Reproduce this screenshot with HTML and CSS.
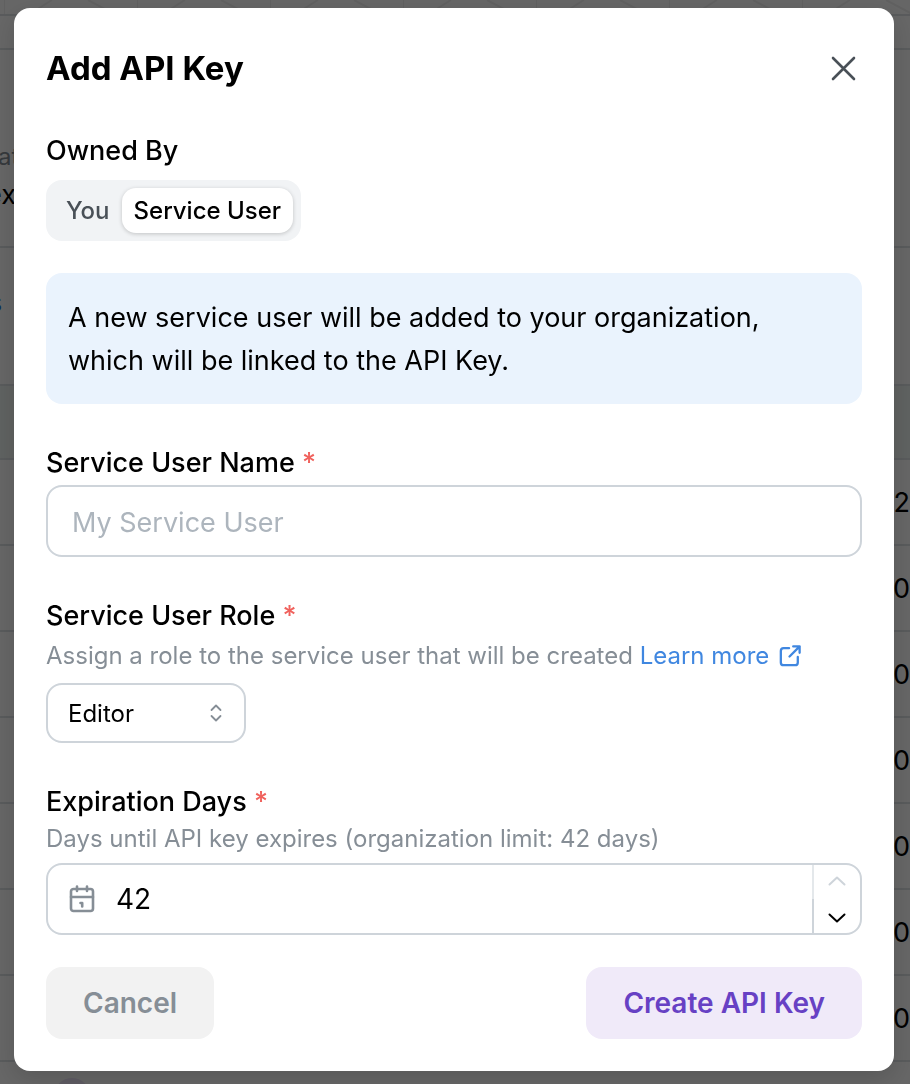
FILE: index.html
```html
<!DOCTYPE html>
<html lang="en">
<head>
<meta charset="utf-8">
<meta name="viewport" content="width=device-width, initial-scale=1">
<title>Add API Key</title>
<link rel="stylesheet" href="styles.css">
</head>
<body>
<div class="page" aria-hidden="true">
  <div class="band band-top">
    <svg class="pattern" width="100%" height="15">
      <defs>
        <pattern id="peaks" x="4" width="133" height="15" patternUnits="userSpaceOnUse">
          <path d="M0 0V15M24 15L48 0M84 0L112 15" fill="none" stroke="#f0f0f0" stroke-width="2"/>
        </pattern>
      </defs>
      <rect width="100%" height="15" fill="url(#peaks)"/>
    </svg>
  </div>
  <div class="band band-nav"></div>
  <div class="band band-intro"><p class="muted">at</p><p class="dark">ex</p></div>
  <div class="band band-tabs"><p class="blue">s</p></div>
  <div class="band band-head"></div>
  <div class="band row">02</div>
  <div class="band row">0</div>
  <div class="band row">0</div>
  <div class="band row">0</div>
  <div class="band row">0</div>
  <div class="band row">0</div>
  <div class="band row">0</div>
  <div class="band-foot"><span class="avatar"></span></div>
</div>

<div class="overlay">
  <form class="dialog" role="dialog" aria-modal="true" aria-labelledby="title">
    <header class="dialog-head">
      <h1 class="title" id="title">Add API Key</h1>
      <button class="close" type="button" aria-label="Close">
        <svg width="26" height="26" viewBox="0 0 26 26" fill="none" stroke="#495057" stroke-width="2.6" stroke-linecap="round"><path d="M3 3L24 24M24 3L3 24"/></svg>
      </button>
    </header>

    <section class="owner">
      <h2 class="label" id="owner-label">Owned By</h2>
      <div class="segments" role="group" aria-labelledby="owner-label">
        <button class="segment" type="button" aria-pressed="false">You</button>
        <button class="segment segment-on" type="button" aria-pressed="true">Service User</button>
      </div>
    </section>

    <p class="notice">A new service user will be added to your organization, which will be linked to the API Key.</p>

    <section class="field field-name">
      <label class="label" for="name">Service User Name <span class="star">*</span></label>
      <input class="box" id="name" type="text" placeholder="My Service User">
    </section>

    <section class="field field-role">
      <label class="label" for="role">Service User Role <span class="star">*</span></label>
      <p class="hint">Assign a role to the service user that will be created <a class="link" href="#">Learn more<svg class="link-icon" width="22" height="22" viewBox="0 0 24 24" fill="none" stroke="currentColor" stroke-width="2.500" stroke-linecap="round" stroke-linejoin="round"><path d="M11 3.500H5A3 3 0 0 0 2 6.500V19a3 3 0 0 0 3 3H17.500a3 3 0 0 0 3-3V13M11.500 12.500L22.500 1.500M15.500 1.500H22.500V8.500"/></svg></a></p>
      <div class="select">
        <select class="select-box" id="role"><option>Editor</option></select>
        <svg class="select-icon" width="12" height="18" viewBox="0 0 12 18" fill="none" stroke="#868e96" stroke-width="1.800" stroke-linecap="round" stroke-linejoin="round"><path d="M1.500 6L6 1.500L10.500 6M1.500 12L6 16.500L10.500 12"/></svg>
      </div>
    </section>

    <section class="field field-days">
      <label class="label" for="days">Expiration Days <span class="star">*</span></label>
      <p class="hint">Days until API key expires (organization limit: 42 days)</p>
      <div class="number">
        <svg class="number-icon" width="26" height="28" viewBox="0 0 26 28" fill="none" stroke="#868e96" stroke-width="2.600" stroke-linecap="round" stroke-linejoin="round"><rect x="2" y="4" width="22" height="22" rx="2.500"/><path d="M2 12H24M8 1.500V6M18 1.500V6M11.500 18H13.200V21.500"/></svg>
        <input class="number-input" id="days" type="number" value="42" max="42">
        <div class="stepper">
          <button class="step step-up" type="button" aria-label="Increase" disabled><svg width="18" height="10" viewBox="0 0 18 10" fill="none" stroke="currentColor" stroke-width="2" stroke-linecap="round" stroke-linejoin="round"><path d="M1.500 8.500L9 1.500L16.500 8.500"/></svg></button>
          <button class="step step-down" type="button" aria-label="Decrease"><svg width="18" height="10" viewBox="0 0 18 10" fill="none" stroke="currentColor" stroke-width="2" stroke-linecap="round" stroke-linejoin="round"><path d="M1.500 1.500L9 8.500L16.500 1.500"/></svg></button>
        </div>
      </div>
    </section>

    <footer class="actions">
      <button class="action cancel" type="button">Cancel</button>
      <button class="action create" type="submit">Create API Key</button>
    </footer>
  </form>
</div>
</body>
</html>
```
FILE: styles.css
```css
*, *::before, *::after { box-sizing: border-box; }
body { margin: 0; font-family: Inter, "Liberation Sans", sans-serif; color: #000; background: #fff; overflow: hidden; height: 100vh; }
h1, h2, p { margin: 0; }
button, input, select { font: inherit; color: inherit; margin: 0; padding: 0; border: 0; background: none; }

.page { font-size: 27px; }
.band { border-bottom: 2px solid #dee2e6; overflow: hidden; }
.band-top { height: 16px; }
.pattern { display: block; }
.band-nav { height: 34px; }
.band-intro { height: 198px; padding-top: 88px; line-height: 38px; }
.band-tabs { height: 138px; padding-top: 38px; }
.band-head { height: 74px; background: #eef5f1; }
.row { height: 86px; line-height: 86px; text-align: right; }
.muted { margin-left: -2px; color: #868e96; font-size: 24px; }
.dark { margin-left: -14px; }
.blue { color: #1c6fe0; margin-left: -12px; }
.band-foot { padding: 16px 54px; }
.avatar { display: block; width: 36px; height: 36px; border-radius: 50%; background: #ece4f8; }

.overlay { position: fixed; inset: 0; padding: 8px 16px 8px 14px; background: rgba(0, 0, 0, 0.6); overflow: auto; }
.dialog { padding: 32px; border-radius: 16px; background: #fff; box-shadow: 0 8px 24px rgba(0, 0, 0, 0.15); }
.dialog-head { display: flex; justify-content: space-between; align-items: center; height: 56px; }
.title { font-size: 33px; font-weight: 700; line-height: 54px; }
.close { display: flex; padding: 6px; cursor: pointer; }

.owner { margin-top: 36px; }
.label { display: block; font-size: 27px; font-weight: 500; line-height: 38px; }
.segments { display: inline-flex; margin-top: 10px; padding: 8px; border-radius: 16px; background: #f1f3f5; }
.segment { height: 45px; padding: 0 12px; border-radius: 14px; font-size: 24px; font-weight: 500; color: #495057; }
.segment-on { background: #fff; color: #000; box-shadow: 0 1px 4px rgba(0, 0, 0, 0.2); }

.notice { margin-top: 32px; padding: 23px 22px 22px; border-radius: 16px; background: #eaf3fd; font-size: 27px; line-height: 43px; }

.field { display: flex; flex-direction: column; margin-top: 40px; }
.star { color: #f0625d; }
.box { width: 100%; height: 72px; margin-top: 3px; padding: 2px 24px 0; border: 2px solid #ced4da; border-radius: 16px; font-size: 27px; }
.box::placeholder { color: #adb5bd; opacity: 1; }
.hint { font-size: 24px; line-height: 36px; color: #868e96; }
.field-role .hint { margin-top: 3px; }
.link { color: #4087e0; text-decoration: none; }
.link-icon { margin-left: 10px; vertical-align: -3px; }
.select { display: grid; width: 200px; margin-top: 9px; align-items: center; }
.select-box { grid-area: 1 / 1; height: 60px; padding: 0 20px; appearance: none; border: 2px solid #ced4da; border-radius: 16px; font-size: 24px; }
.select-icon { grid-area: 1 / 1; justify-self: end; margin-right: 24px; pointer-events: none; }

.number { display: flex; align-items: center; height: 72px; margin-top: 6px; padding-left: 21px; border: 2px solid #ced4da; border-radius: 16px; }
.number-input { flex: 1; min-width: 0; height: 100%; margin-left: 21px; font-size: 28px; appearance: textfield; outline: 0; }
.number-input::-webkit-inner-spin-button { appearance: none; margin: 0; }
.stepper { display: flex; flex-direction: column; width: 48px; height: 100%; }
.step { flex: 1; display: flex; align-items: center; justify-content: center; border-left: 2px solid #ced4da; }
.step-up { padding-bottom: 3px; color: #ced4da; border-left-color: #e4e8eb; }
.step-down { padding-top: 3px; }

.actions { display: flex; justify-content: space-between; margin-top: 32px; }
.action { height: 72px; padding: 0 37px; border-radius: 16px; font-size: 28px; font-weight: 600; }
.cancel { background: #f2f2f2; color: #868e96; }
.create { background: #f0eaf9; color: #6741c4; }
```
